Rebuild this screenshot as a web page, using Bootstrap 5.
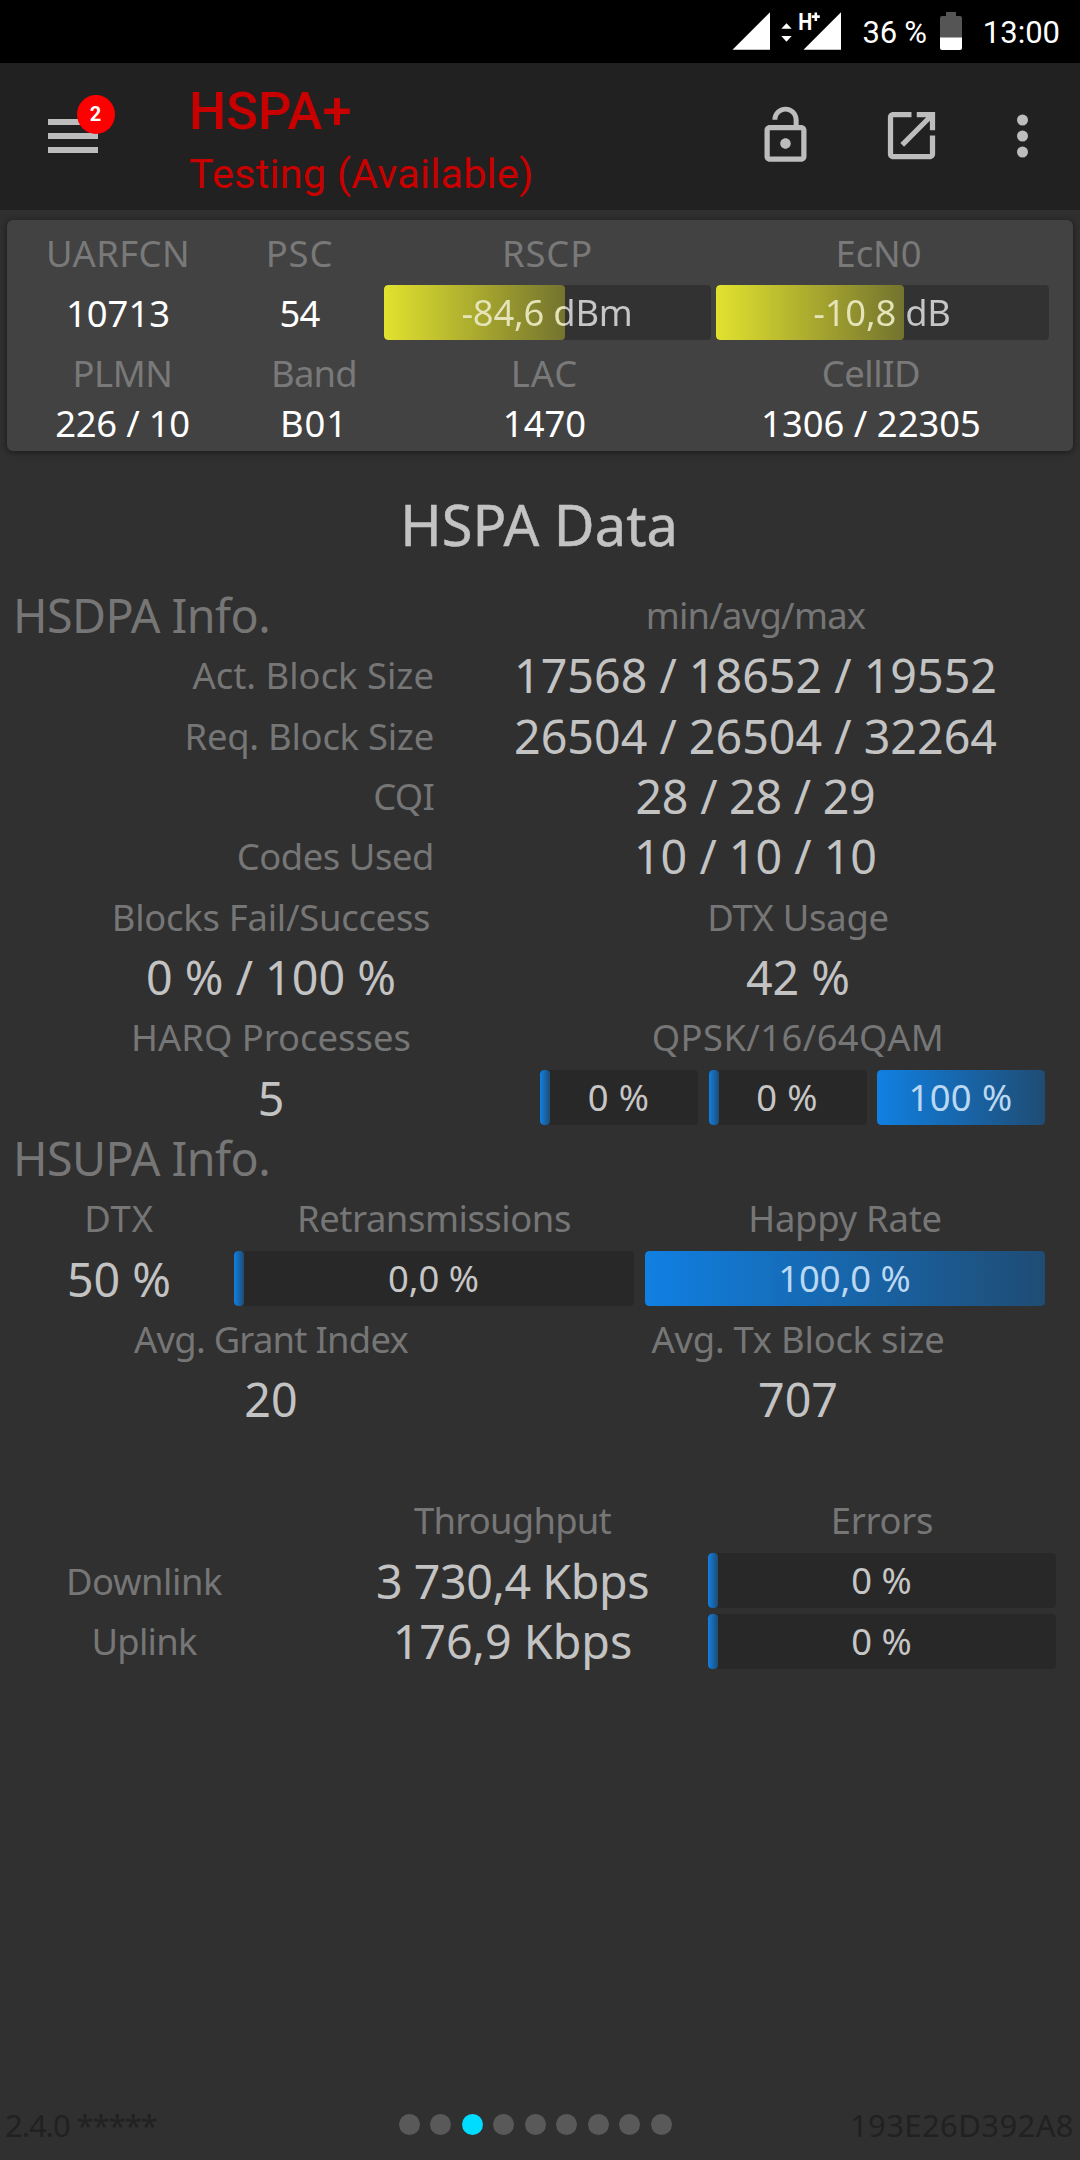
<!DOCTYPE html>
<html lang="en" data-bs-theme="dark">
<head>
<meta charset="utf-8">
<meta name="viewport" content="width=device-width, initial-scale=1">
<title>HSPA Data</title>
<link href="https://cdn.jsdelivr.net/npm/bootstrap@5.3.0/dist/css/bootstrap.min.css" rel="stylesheet">
<style>
  body { background: #303030; color: #767676; font-family: "Noto Sans", sans-serif; font-size: 36.4px; line-height: 60.36px; white-space: nowrap; }
  .screen { height: 2160px; overflow: hidden; }
  .roboto { font-family: Roboto, sans-serif; }

  .statusbar { height: 63px; background: #000; color: #fff; font-size: 31px; line-height: 63px; padding-right: 20px; }
  .statusbar span { padding-top: 2px; }
  .signals { width: 112px; margin-right: 22px; }
  .batt { width: 22px; margin: 0 21px 0 13px; }

  .appbar { height: 147px; background: #212121; padding: 0 47px 0 48px; color: #c80000; }
  .menu-btn { width: 50px; height: 34px; margin-top: -1px; }
  .count-badge { left: 28.5px; top: -24px; width: 38px; height: 39px; background: #f00; color: #fff; font-size: 20px; line-height: 39px; font-weight: 700; }
  .net-title { font-size: 52.5px; line-height: 62px; font-weight: 500; }
  .net-sub { font-size: 41.5px; line-height: 64px; letter-spacing: .16px; }
  .heading-box { margin-left: 91px; padding-top: 17px; }
  .tool { color: #bdbdbd; margin-top: -2px; }
  .tool-gap { gap: 63px; }
  .more-dots { margin-left: 6px; }

  .info-card { margin: 10px 7px 0; height: 231px; padding: 3px 0 0 4px; background: #424242; border-radius: 6px; box-shadow: 0 1px 7px rgba(0,0,0,.5); color: #797979; line-height: 60px; }
  .info-card .val { color: #fff; }
  .grid-a, .grid-b, .grid-c, .grid-d, .grid-e, .grid-f, .grid-q { display: grid; text-align: center; }
  .grid-a { grid-template-columns: 214px 149px 10px 327px 5px 333px; align-items: center; }
  .grid-b { grid-template-columns: 223px 160px 301px 352px; }
  .short { line-height: 44px; margin-top: -2px; }
  .grid-c { grid-template-columns: 434px 643px; }
  .grid-d { grid-template-columns: 526px 528px; padding-left: 8px; }
  .grid-e { grid-template-columns: 214px 8px 400px 11px 400px; padding-left: 12px; align-items: center; }
  .grid-f { grid-template-columns: 272px 39px 387px 2px 348px; padding-left: 8px; align-items: center; }
  .grid-q { grid-template-columns: 158px 158px 168px; column-gap: 10.5px; padding-left: 6px; align-items: center; }

  .title { font-size: 56px; line-height: 74px; color: #c3c3c3; margin-top: 36px; padding-right: 2px; -webkit-text-stroke: .5px #c3c3c3; }
  .rows { margin-top: 23.8px; }
  .section { font-size: 46.6px; padding-left: 13px; text-align: left; letter-spacing: -.55px; }
  .big { font-size: 46.6px; color: #c3c3c3; }
  .gap-row { height: 60.36px; }

  .meter { position: relative; height: 55px; border-radius: 4px; background: #282828; color: #c6c6c6; overflow: hidden; line-height: 55px; --fill: 10px; }
  .meter .bar-fill { position: absolute; inset: 0 auto 0 0; width: var(--fill); border-radius: 4px; background: linear-gradient(90deg, #1080e2, #1f4c74); }
  .meter .bar-text { position: relative; display: block; line-height: 55px; padding-right: 1px; }
  .meter.full .bar-text { color: #bad8f2; }
  .meter.signal { background: #323232; top: -1px; }
  .meter.signal .bar-fill { background: linear-gradient(90deg, #e2e22f, #73732f); }
  .meter.signal .bar-text { color: transparent; -webkit-background-clip: text; background-clip: text; background-image: linear-gradient(90deg, #e4e4b8 var(--fill), #c6c6c6 var(--fill)); }

  .t1 { letter-spacing: -.25px; }
  .t2 { letter-spacing: -.45px; }
  .t3 { letter-spacing: -.75px; }
  .w1 { letter-spacing: .4px; }
  .w2 { letter-spacing: .9px; }

  .foot { color: #212121; font-size: 31px; line-height: 70px; height: 70px; padding: 0 6px 0 5px; }
  .foot > span { flex: 1 1 0; }
  .foot .build { letter-spacing: -1.05px; }
  .dots { gap: 10.5px; margin: 0 9px 2px 0; }
  .dots i { width: 21px; height: 21px; border-radius: 50%; background: #595959; }
  .dots i.on { background: #00dcff; }
</style>
</head>
<body>
<div class="screen d-flex flex-column">

  <div class="statusbar roboto d-flex justify-content-end align-items-center">
    <svg class="signals" height="63" viewBox="0 0 112 63" fill="#fff">
      <path d="M3.500 49.700 41 12.300v37.400zM74.500 49.700 112 12.300v37.400z"/>
      <path d="M52.300 28.700 57.500 23.300l5.200 5.400zM52.300 36l5.200 5.700 5.200-5.700z"/>
      <text x="69.300" y="30" font-family="Roboto" font-weight="700" font-size="24.500" textLength="14" lengthAdjust="spacingAndGlyphs">H</text>
      <path d="M85.500 12.600h2.600v2.700h2.700v2.600h-2.700v3h-2.600v-3h-2.700v-2.600h2.700z"/>
    </svg>
    <span class="t1">36 %</span>
    <svg class="batt" height="63" viewBox="0 0 22 63"><path fill="#555" d="M6 12h10v4h4q2 0 2 2v20H0V18q0-2 2-2h4z"/><path fill="#fff" d="M0 37.500h22V48q0 2-2 2H2q-2 0-2-2z"/></svg>
    <span>13:00</span>
  </div>

  <header class="appbar d-flex align-items-center">
    <div class="menu-btn position-relative">
      <svg class="d-block" width="50" height="34" viewBox="0 0 50 34" fill="#bdbdbd"><path d="M0 0h50v6H0zM0 14h50v6H0zM0 28h50v6H0z"/></svg>
      <span class="count-badge roboto position-absolute rounded-circle text-center">2</span>
    </div>
    <div class="heading-box roboto align-self-start">
      <div class="net-title">HSPA+</div>
      <div class="net-sub">Testing (Available)</div>
    </div>
    <div class="tool tool-gap d-flex align-items-center ms-auto">
      <svg width="63" height="63" viewBox="0 0 24 24" fill="currentColor"><path d="M12 17c1.100 0 2-.9 2-2s-.9-2-2-2-2 .9-2 2 .9 2 2 2zm6-9h-1V6c0-2.760-2.240-5-5-5S7 3.240 7 6h1.900c0-1.710 1.390-3.100 3.100-3.100 1.710 0 3.100 1.390 3.100 3.100v2H6c-1.100 0-2 .9-2 2v10c0 1.100.9 2 2 2h12c1.100 0 2-.9 2-2V10c0-1.100-.9-2-2-2zm0 12H6V10h12v10z"/></svg>
      <svg width="63" height="63" viewBox="0 0 24 24" fill="currentColor"><path d="M19 19H5V5h7V3H5c-1.110 0-2 .9-2 2v14c0 1.100.89 2 2 2h14c1.100 0 2-.9 2-2v-7h-2v7zM14 3v2h3.590l-9.830 9.830 1.410 1.410L19 6.410V10h2V3h-7z"/></svg>
      <svg class="more-dots" width="21" height="63" viewBox="0 0 21 63" fill="currentColor"><circle cx="10.500" cy="16" r="5.500"/><circle cx="10.500" cy="32" r="5.500"/><circle cx="10.500" cy="48" r="5.500"/></svg>
    </div>
  </header>

  <section class="info-card">
    <div class="grid-a">
      <span class="w1">UARFCN</span><span class="w2">PSC</span><span></span><span class="w2">RSCP</span><span></span><span class="pe-2">EcN0</span>
    </div>
    <div class="grid-a">
      <span class="val">10713</span><span class="val t3">54</span><span></span>
      <div class="meter signal" style="--fill:181px"><div class="bar-fill"></div><span class="bar-text t1">-84,6 dBm</span></div><span></span>
      <div class="meter signal" style="--fill:188px"><div class="bar-fill"></div><span class="bar-text t1">-10,8 dB</span></div>
    </div>
    <div class="grid-b">
      <span class="t2">PLMN</span><span class="t3">Band</span><span class="w2">LAC</span><span class="t2">CellID</span>
    </div>
    <div class="grid-b val short">
      <span class="t1">226 / 10</span><span class="w2">B01</span><span>1470</span><span>1306 / 22305</span>
    </div>
  </section>

  <main>
    <h1 class="title text-center fw-normal mb-0">HSPA Data</h1>
    <div class="rows">
      <div class="grid-c"><span class="section">HSDPA Info.</span><span class="t3">min/avg/max</span></div>
      <div class="grid-c"><span class="text-end">Act. Block Size</span><span class="big">17568 / 18652 / 19552</span></div>
      <div class="grid-c"><span class="text-end t1">Req. Block Size</span><span class="big">26504 / 26504 / 32264</span></div>
      <div class="grid-c"><span class="text-end t3">CQI</span><span class="big t1">28 / 28 / 29</span></div>
      <div class="grid-c"><span class="text-end t2">Codes Used</span><span class="big">10 / 10 / 10</span></div>
      <div class="grid-d"><span class="t1">Blocks Fail/Success</span><span class="t1">DTX Usage</span></div>
      <div class="grid-d"><span class="big">0 % / 100 %</span><span class="big">42 %</span></div>
      <div class="grid-d"><span>HARQ Processes</span><span class="w1">QPSK/16/64QAM</span></div>
      <div class="grid-d">
        <span class="big">5</span>
        <div class="grid-q">
          <div class="meter"><div class="bar-fill"></div><span class="bar-text w1">0 %</span></div>
          <div class="meter"><div class="bar-fill"></div><span class="bar-text w1">0 %</span></div>
          <div class="meter full" style="--fill:100%"><div class="bar-fill"></div><span class="bar-text w1">100 %</span></div>
        </div>
      </div>
      <div class="section">HSUPA Info.</div>
      <div class="grid-e"><span class="w2">DTX</span><span></span><span class="t2">Retransmissions</span><span></span><span class="t1">Happy Rate</span></div>
      <div class="grid-e">
        <span class="big">50 %</span><span></span>
        <div class="meter"><div class="bar-fill"></div><span class="bar-text">0,0 %</span></div><span></span>
        <div class="meter full" style="--fill:100%"><div class="bar-fill"></div><span class="bar-text">100,0 %</span></div>
      </div>
      <div class="grid-d"><span class="t3">Avg. Grant Index</span><span class="t1">Avg. Tx Block size</span></div>
      <div class="grid-d"><span class="big">20</span><span class="big">707</span></div>
      <div class="gap-row"></div>
      <div class="grid-f"><span></span><span></span><span class="t3">Throughput</span><span></span><span class="t1">Errors</span></div>
      <div class="grid-f">
        <span class="t2">Downlink</span><span></span><span class="big t2">3 730,4 Kbps</span><span></span>
        <div class="meter"><div class="bar-fill"></div><span class="bar-text">0 %</span></div>
      </div>
      <div class="grid-f">
        <span class="t3">Uplink</span><span></span><span class="big">176,9 Kbps</span><span></span>
        <div class="meter"><div class="bar-fill"></div><span class="bar-text">0 %</span></div>
      </div>
    </div>
  </main>

  <footer class="foot d-flex align-items-center mt-auto">
    <span class="build">2.4.0 *****</span>
    <div class="dots d-flex"><i></i><i></i><i class="on"></i><i></i><i></i><i></i><i></i><i></i><i></i></div>
    <span class="text-end w1">193E26D392A8</span>
  </footer>
</div>
<script src="https://cdn.jsdelivr.net/npm/bootstrap@5.3.0/dist/js/bootstrap.bundle.min.js"></script>
</body>
</html>
